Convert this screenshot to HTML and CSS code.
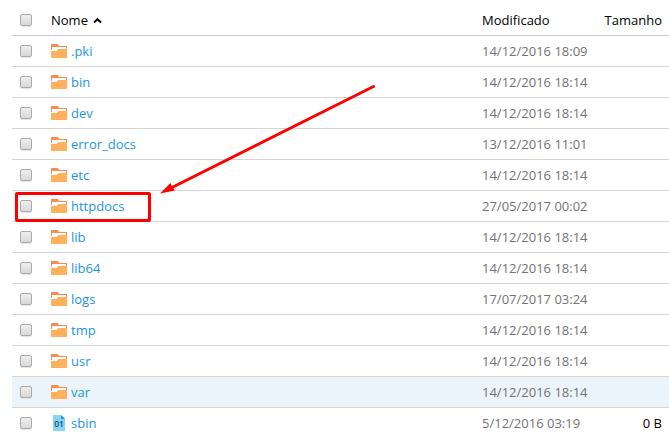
FILE: index.html
```
<!DOCTYPE html>
<html lang="pt">
<head>
<meta charset="utf-8">
<title>Arquivos</title>
<link rel="stylesheet" href="styles.css">
</head>
<body>
<svg class="defs" aria-hidden="true">
  <symbol id="folder" viewBox="0 0 16 14">
    <path fill="#ff8a4f" d="M0 0h7l1 2h8v4H0z"/>
    <path fill="#fff" d="M1 3h14v4H1z"/>
    <path fill="#ffb05c" d="M0 7h5.5L7.5 5H16v8.5l-.5.5H.5L0 13.5z"/>
  </symbol>
</svg>
<main class="files">
  <div class="row head"><span class="check"></span><span class="name">Nome<svg class="sort" viewBox="0 0 9 5"><path d="M1 4.5l3.5-3.3L8 4.5"/></svg></span><span class="date">Modificado</span><span class="size">Tamanho</span></div>
  <div class="row"><span class="check"></span><a class="name"><svg class="folder"><use href="#folder"/></svg>.pki</a><span class="date">14/12/2016 18:09</span><span class="size"></span></div>
  <div class="row"><span class="check"></span><a class="name"><svg class="folder"><use href="#folder"/></svg>bin</a><span class="date">14/12/2016 18:14</span><span class="size"></span></div>
  <div class="row"><span class="check"></span><a class="name"><svg class="folder"><use href="#folder"/></svg>dev</a><span class="date">14/12/2016 18:14</span><span class="size"></span></div>
  <div class="row"><span class="check"></span><a class="name"><svg class="folder"><use href="#folder"/></svg>error_docs</a><span class="date">13/12/2016 11:01</span><span class="size"></span></div>
  <div class="row"><span class="check"></span><a class="name"><svg class="folder"><use href="#folder"/></svg>etc</a><span class="date">14/12/2016 18:14</span><span class="size"></span></div>
  <div class="row"><span class="check"></span><a class="name"><svg class="folder"><use href="#folder"/></svg>httpdocs</a><span class="date">27/05/2017 00:02</span><span class="size"></span></div>
  <div class="row"><span class="check"></span><a class="name"><svg class="folder"><use href="#folder"/></svg>lib</a><span class="date">14/12/2016 18:14</span><span class="size"></span></div>
  <div class="row"><span class="check"></span><a class="name"><svg class="folder"><use href="#folder"/></svg>lib64</a><span class="date">14/12/2016 18:14</span><span class="size"></span></div>
  <div class="row"><span class="check"></span><a class="name"><svg class="folder"><use href="#folder"/></svg>logs</a><span class="date">17/07/2017 03:24</span><span class="size"></span></div>
  <div class="row"><span class="check"></span><a class="name"><svg class="folder"><use href="#folder"/></svg>tmp</a><span class="date">14/12/2016 18:14</span><span class="size"></span></div>
  <div class="row"><span class="check"></span><a class="name"><svg class="folder"><use href="#folder"/></svg>usr</a><span class="date">14/12/2016 18:14</span><span class="size"></span></div>
  <div class="row active"><span class="check"></span><a class="name"><svg class="folder"><use href="#folder"/></svg>var</a><span class="date">14/12/2016 18:14</span><span class="size"></span></div>
  <div class="row"><span class="check"></span><a class="name"><svg class="binary" viewBox="0 0 12 16"><path fill="#86d3f7" d="M0 0h8l4 4v12H0z"/><path fill="#2a9ac6" d="M8 0l4 4H8z"/><text x="1.2" y="11.5">01</text></svg>sbin</a><span class="date">5/12/2016 03:19</span><span class="size">0 B</span></div>
</main>
<svg class="marks" viewBox="0 0 669 443">
  <rect x="16.5" y="193.5" width="133" height="27" rx="0.5"/>
  <path d="M373.5 86.5L171 188"/>
  <path class="tip" d="M160 193.5L170.5 183l1.5 3.5 3 4z"/>
</svg>
</body>
</html>
```
FILE: styles.css
```
body {
  margin: 0;
  height: 443px;
  overflow: hidden;
  background: #fff;
  font: 13px/18px "Open Sans", "Noto Sans", sans-serif;
}
.defs { position: absolute; width: 0; height: 0; }
.files { padding: 5px 0 0 12px; }
.row {
  box-sizing: border-box;
  height: 31px;
  display: grid;
  grid-template-columns: 31px 431px 112px 76px;
  align-items: center;
  padding-left: 8px;
  border-bottom: 1px solid #d3d5d7;
  color: #737373;
}
.head { border-color: #c2cad0; color: #000; }
.active { background: #ebf4fa; }
.row:last-child { border-color: transparent; }
.check {
  box-sizing: border-box;
  width: 12px;
  height: 12px;
  border: 1px solid #aaa;
  border-radius: 2px;
  background: linear-gradient(#eee, #d9d9d9);
  box-shadow: 0 1px 1px #e4e4e4;
}
.name { display: flex; align-items: center; color: #2196e3; }
.head .name { color: #000; }
.folder { width: 16px; height: 14px; margin-right: 4px; }
.binary { width: 12px; height: 16px; margin: 0 6px 0 2px; }
.binary text { font: 600 8.5px "Open Sans", sans-serif; fill: #11526f; }
.sort {
  width: 9px;
  height: 5px;
  margin-left: 5px;
  fill: none;
  stroke: #000;
  stroke-width: 2;
}
.size {
  width: 68px;
  justify-self: start;
  text-align: right;
  color: #000;
}
.marks {
  position: absolute;
  inset: 0;
  width: 669px;
  height: 443px;
  fill: none;
  stroke: #f00;
  stroke-width: 3;
  stroke-linecap: round;
}
.marks .tip { fill: #f00; stroke: none; }
```
